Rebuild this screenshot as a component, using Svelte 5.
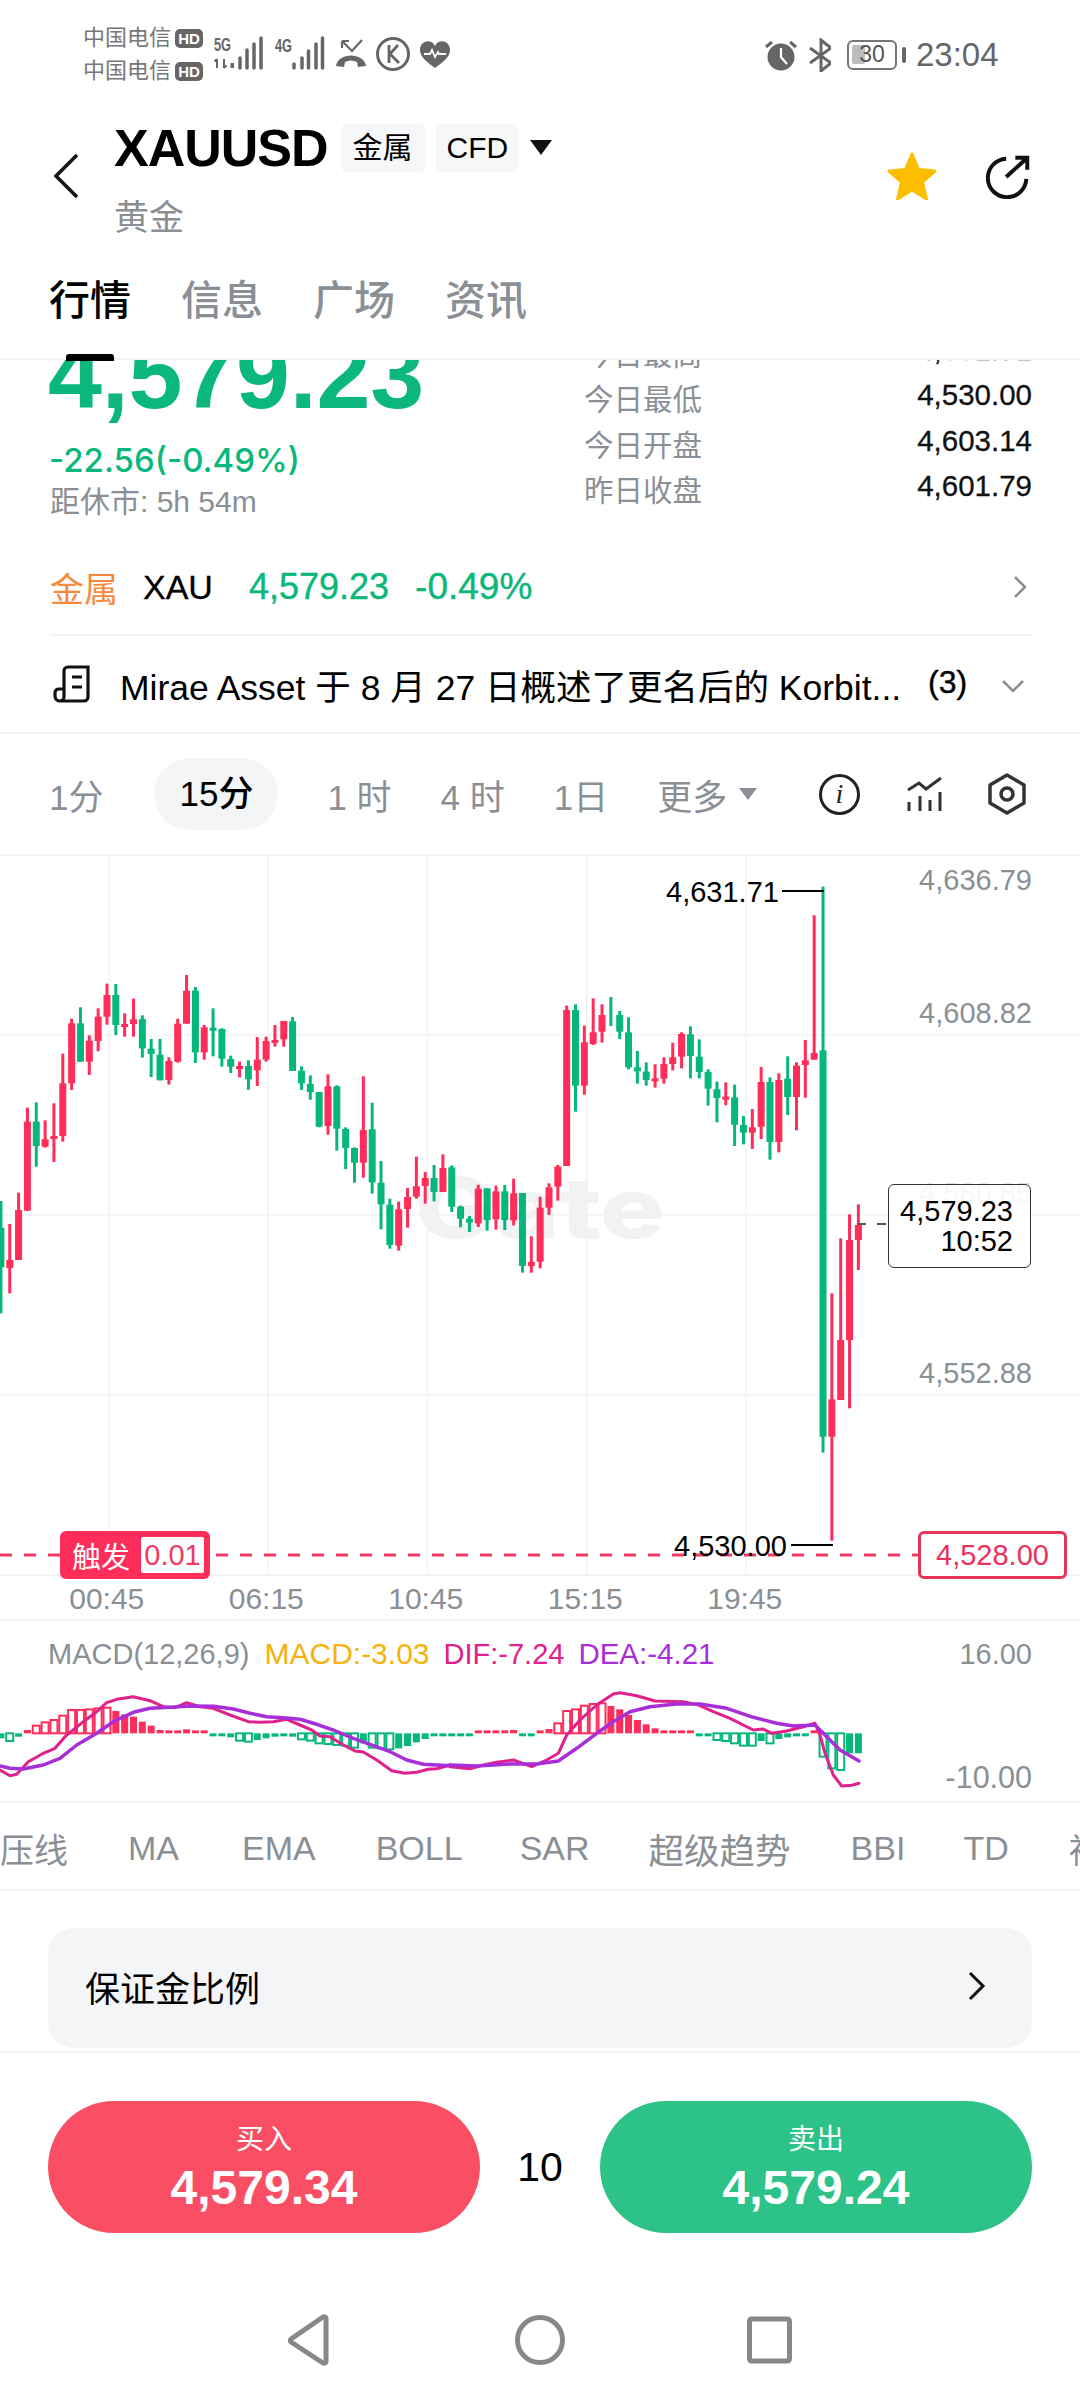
<script>
  const G = 'G', R = 'R';
  const raw = [
    [G,1023,1103,1222,1360],[R,1092,1200,1224,1300],[R,998,1050,1200,1200],[R,743,785,1052,1052],[G,727,785,858,920],
    [R,781,838,860,863],[R,730,828,834,906],[R,581,670,828,845],[R,476,490,670,690],[G,442,490,605,605],
    [R,526,542,605,645],[R,445,470,543,574],[R,371,405,470,494],[G,372,405,495,525],[R,460,492,494,530],
    [R,416,478,492,530],[G,466,477,565,593],[G,537,566,582,651],[G,537,584,661,661],[R,592,603,660,674],
    [R,476,491,605,608],[R,345,392,491,491],[G,381,392,577,609],[R,495,502,577,599],[G,445,503,510,589],
    [G,505,507,596,620],[G,587,597,620,639],[R,605,618,620,652],[G,601,618,658,689],[R,531,599,631,678],
    [R,530,543,599,605],[R,495,540,543,560],[R,483,483,538,560],[G,471,484,633,633],[G,619,632,670,690],
    [G,646,672,696,719],[G,696,696,800,802],[R,643,679,798,824],[G,676,679,806,872],[G,802,807,864,927],
    [G,862,864,908,968],[R,649,810,908,953],[G,728,808,967,1001],[G,903,968,1033,1108],[G,1016,1034,1155,1166],
    [R,1025,1048,1157,1172],[R,984,1011,1047,1103],[R,890,979,1010,1016],[R,936,954,978,1031],[G,915,954,996,1024],
    [R,883,924,996,996],[G,916,922,1040,1056],[G,1037,1040,1076,1102],[G,1068,1076,1088,1116],[R,974,986,1090,1101],
    [G,985,985,1080,1112],[R,977,994,1078,1109],[G,975,994,1080,1110],[R,956,1000,1081,1096],[G,999,999,1218,1238],
    [R,1129,1206,1218,1238],[R,1010,1043,1205,1225],[R,970,982,1043,1065],[R,915,920,980,1022],[R,437,450,918,918],
    [G,433,450,677,755],[R,497,547,677,704],[R,415,517,552,555],[R,433,465,515,548],[G,411,411,411,498],
    [G,453,465,515,537],[G,472,517,622,628],[G,573,622,634,671],[G,607,635,660,677],[R,613,655,658,683],
    [R,592,612,656,671],[R,548,592,612,631],[R,517,522,590,625],[G,499,523,588,655],[G,538,590,636,655],
    [G,628,636,686,737],[G,665,688,714,787],[R,667,710,713,736],[G,674,712,794,858],[G,768,795,818,853],
    [R,747,802,818,867],[R,621,666,800,837],[G,652,666,846,899],[R,640,660,846,877],[G,589,656,711,765],
    [R,607,617,711,811],[R,540,601,615,713],[R,166,579,599,599],[G,80,571,1730,1778],[R,1300,1618,1730,2042],
    [R,1135,1440,1620,1620],[R,1063,1140,1440,1645],[R,1033,1095,1140,1230]
  ];
  const colX = (i) => 0.9 + 8.84 * i;
  const py = (z) => 4 + z / 3;
  const candles = raw.map(([c, wt, bt, bb, wb], i) => ({
    cls: c === G ? 'up' : 'down',
    x: colX(i),
    wy: py(wt),
    wh: (wb - wt) / 3,
    by: py(bt),
    bh: Math.max((bb - bt) / 3, bb === bt ? 0 : 3)
  }));

  const barTops = [175,183,170,150,137,127,120,107,90,90,88,85,83,93,103,110,125,137,150,156,155,148,155,157,
    165,165,172,182,185,180,175,170,168,170,178,182,190,192,195,197,203,190,203,205,208,205,198,187,177,168,165,
    165,165,165,156,156,153,153,150,165,165,157,147,130,93,88,77,72,70,78,88,105,120,133,145,152,155,153,155,
    165,168,180,183,190,197,197,183,190,177,172,165,165,155,230,265,270,220,220];
  const hollow = new Set([1,4,5,6,7,8,9,10,11,12,27,28,34,35,36,37,38,39,40,42,43,44,63,64,65,66,67,68,81,82,83,84,85,87,93,94,95]);
  const bars = barTops.map((t, i) => {
    const base = 160 / 3, v = t / 3;
    const h = Math.max(Math.abs(v - base), 3);
    return {
      x: colX(i) - 3.5,
      y: t > 160 ? base : base - h,
      h,
      cls: (t > 160 ? 'up' : 'down') + (hollow.has(i) ? ' hollow' : '')
    };
  });

  const difL = [0,270,30,287,50,283,85,245,130,220,165,205,195,170,250,125,290,95,320,68,350,58,400,50,450,62,490,80,525,83,560,68,600,80,640,85,690,105,745,125,780,127,820,125,860,118,900,135,935,150,960,168,990,170,1030,195,1065,213,1090,216,1130,240,1175,272,1215,280,1250,277,1285,268,1310,266,1350,255];
  const difR = [0,260,60,266,100,255,140,247,190,240,245,260,290,240,325,220,350,165,390,120,440,75,490,42,510,38,560,47,615,63,700,65,745,75,790,95,840,115,910,150,940,147,965,160,1010,153,1060,140,1095,130,1110,165,1125,220,1150,285,1175,318,1205,316,1227,310];
  const deaL = [0,258,30,265,70,267,130,255,180,235,230,195,290,160,340,125,400,97,450,85,510,82,570,78,640,79,700,87,750,100,800,110,850,113,900,118,950,133,1000,150,1060,175,1120,197,1170,215,1220,240,1270,253,1350,257];
  const deaR = [0,255,80,258,180,252,260,252,325,243,380,205,440,160,490,125,540,95,600,80,680,72,750,72,830,85,910,112,980,130,1030,138,1095,135,1130,170,1170,210,1227,243];
  const toPts = (a, off) => {
    const out = [];
    for (let i = 0; i < a.length; i += 2) out.push(`${(off + a[i] / 3).toFixed(1)},${(a[i + 1] / 3).toFixed(1)}`);
    return out.join(' ');
  };
  const difLine = toPts(difL, 0) + ' ' + toPts(difR, 450);
  const deaLine = toPts(deaL, 0) + ' ' + toPts(deaR, 450);

  const grid = [109.3, 268, 427.5, 586.8, 745.7];
  const times = ['00:45', '06:15', '10:45', '15:15', '19:45'];
  const yLabels = [
    { t: '4,636.79', y: 23.5, faint: false },
    { t: '4,608.82', y: 156.5, faint: false },
    { t: '4,580.85', y: 336.5, faint: true },
    { t: '4,552.88', y: 516.5, faint: false }
  ];
  const stats = [
    ['今日最高', '4,631.71'],
    ['今日最低', '4,530.00'],
    ['今日开盘', '4,603.14'],
    ['昨日收盘', '4,601.79']
  ];
  const tabs = ['行情', '信息', '广场', '资讯'];
  const indicators = ['支撑压线', 'MA', 'EMA', 'BOLL', 'SAR', '超级趋势', 'BBI', 'TD', '神奇九转'];
</script>

<div class="page">
  <header class="status">
    <div class="carriers">
      <div class="carrier">中国电信<span class="hd">HD</span></div>
      <div class="carrier">中国电信<span class="hd">HD</span></div>
    </div>
    <svg class="status-left" width="250" height="50" viewBox="210 30 250 50" aria-hidden="true">
      <text class="net" x="214" y="51" textLength="17" lengthAdjust="spacingAndGlyphs">5G</text>
      <path d="M217 59v9M214.5 61.5l2.5-2.5M224 59v9M226.5 65.5l-2.5 2.5" fill="none" stroke="#666" stroke-width="2"/>
      <rect x="230.500" y="63" width="3.500" height="5" fill="#666"/>
      <path d="M240 58v10M247 50v18M254 44v24M261 38v30" stroke="#666" stroke-width="3.500" stroke-linecap="round"/>
      <text class="net" x="275" y="52" textLength="17" lengthAdjust="spacingAndGlyphs">4G</text>
      <path d="M294 64v4M302 58v10M308.500 51v17M316 44v24M322.500 38v30" stroke="#666" stroke-width="3.500" stroke-linecap="round"/>
      <path d="M336 66c2-14 28-14 30 0l-8 1-1-5c-4-2-8-2-12 0l-1 5z" fill="#666"/>
      <path d="M342 41l10 10 10-11M342 41h7M342 41v7" fill="none" stroke="#666" stroke-width="2.200"/>
      <circle cx="393" cy="54" r="15.500" fill="none" stroke="#666" stroke-width="3"/>
      <path d="M389 45v18M398 45l-8 9 9 9" fill="none" stroke="#666" stroke-width="2.800"/>
      <path d="M435 68c-8-6-15-11-15-18 0-9 11-12 15-4 4-8 15-5 15 4 0 7-7 12-15 18z" fill="#666"/>
      <path d="M424 54h6l2-4 3 7 3-5 1 2h7" fill="none" stroke="#fff" stroke-width="1.800"/>
    </svg>
    <div class="status-right">
      <svg width="66" height="34" viewBox="765 37 66 34" aria-hidden="true">
        <circle cx="781" cy="56" r="13.500" fill="#666"/>
        <path d="M781 47v9l6 7" fill="none" stroke="#fff" stroke-width="2.200"/>
        <path d="M766 46l6-5M796 46l-6-5" fill="none" stroke="#666" stroke-width="3"/>
        <path d="M810 47l21 15-10 8V39l10 8-21 15" fill="none" stroke="#666" stroke-width="3"/>
      </svg>
      <div class="battery">
        <span class="level"></span>
        <span class="batt-text">30</span>
      </div>
      <span class="nub"></span>
      <span class="clock">23:04</span>
    </div>
  </header>

  <section class="head">
    <svg class="back" width="26" height="46" viewBox="0 0 26 46" aria-hidden="true">
      <path d="M24 2L3 23l21 21" fill="none" stroke="#111" stroke-width="3.500"/>
    </svg>
    <div class="title">
      <div class="title-row">
        <h1>XAUUSD</h1>
        <span class="tag">金属</span>
        <span class="tag">CFD</span>
        <span class="caret"></span>
      </div>
      <div class="subtitle">黄金</div>
    </div>
    <svg class="star" width="54" height="50" viewBox="0 0 54 50" aria-hidden="true">
      <path d="M27 4l6.500 15.500 16.500 1.500-12.500 11 4 17L27 40l-14.500 9 4-17L4 21l16.500-1.500z" fill="#fdbe00" stroke="#fdbe00" stroke-width="3" stroke-linejoin="round"/>
    </svg>
    <svg class="share" width="44" height="44" viewBox="0 0 48 48" aria-hidden="true">
      <path d="M22 4A21 21 0 1 0 44 26M22 24L45 3M32 3h13v13" fill="none" stroke="#111" stroke-width="4.300"/>
    </svg>
  </section>

  <nav class="tabs">
    {#each tabs as t, i}
      <span class="tab" class:active={i === 0}>{t}</span>
    {/each}
  </nav>

  <section class="overview">
    <div class="quote">
      <div class="quote-left">
        <div class="bigprice">4,579.23</div>
        <div class="change">-22.56(-0.49%)</div>
        <div class="countdown">距休市: 5h 54m</div>
      </div>
      <div class="stats">
        {#each stats as [k, v]}
          <div class="stat"><span class="k">{k}</span><span class="v">{v}</span></div>
        {/each}
      </div>
    </div>
    <div class="metal">
      <span class="m-tag">金属</span>
      <span class="m-sym">XAU</span>
      <span class="m-price">4,579.23</span>
      <span class="m-pct">-0.49%</span>
      <svg class="m-go" width="16" height="24" viewBox="0 0 16 24" aria-hidden="true">
        <path d="M3 2l10 10L3 22" fill="none" stroke="#8a8f96" stroke-width="2.500"/>
      </svg>
    </div>
  </section>

  <section class="news">
    <svg width="40" height="38" viewBox="0 0 40 38" aria-hidden="true">
      <path d="M12 24V6a4 4 0 0 1 4-4h20v30a4 4 0 0 1-4 4H8a5 5 0 0 1-5-5v-3c0-2 1-4 4-4h5v8a4 4 0 0 1-4 4" fill="none" stroke="#111" stroke-width="3.200"/>
      <path d="M20 12h10M20 22h10" stroke="#111" stroke-width="3.200"/>
    </svg>
    <span class="headline">Mirae Asset 于 8 月 27 日概述了更名后的 Korbit...</span>
    <span class="count">(3)</span>
    <svg width="24" height="14" viewBox="0 0 24 14" aria-hidden="true">
      <path d="M2 2l10 10L22 2" fill="none" stroke="#8a8f96" stroke-width="2.500"/>
    </svg>
  </section>

  <section class="intervals">
    <span class="iv">1分</span>
    <span class="iv pill">15分</span>
    <span class="iv">1 时</span>
    <span class="iv">4 时</span>
    <span class="iv">1日</span>
    <span class="iv more">更多<i class="mini-caret"></i></span>
    <div class="tools">
      <div class="info-ic"><span>i</span></div>
      <svg width="37" height="36" viewBox="0 0 37 36" aria-hidden="true">
        <path d="M2 14l11-7 7 6L35 2" fill="none" stroke="#333" stroke-width="3" stroke-linejoin="miter"/>
        <path d="M3 26v9M14 20v15M24 24v11M34 16v19" stroke="#333" stroke-width="3"/>
      </svg>
      <svg width="38" height="42" viewBox="0 0 38 42" aria-hidden="true">
        <path d="M19 2l17 10v18L19 40 2 30V12z" fill="none" stroke="#333" stroke-width="3.500" stroke-linejoin="round"/>
        <circle cx="19" cy="21" r="6" fill="none" stroke="#333" stroke-width="3.500"/>
      </svg>
    </div>
  </section>

  <section class="chart">
    <svg class="plot" width="1080" height="719" viewBox="0 0 1080 719" aria-hidden="true">
      {#each grid as g}
        <line class="gl" x1={g} x2={g} y1="0" y2="719"/>
      {/each}
      <line class="gl" x1="0" x2="1080" y1="179" y2="179"/>
      <line class="gl" x1="0" x2="1080" y1="359" y2="359"/>
      <line class="gl" x1="0" x2="1080" y1="539" y2="539"/>
      <text class="mark" x="415" y="382" textLength="250" lengthAdjust="spacingAndGlyphs">Gate</text>
      {#each candles as c}
        <rect class={c.cls} x={c.x - 1.5} y={c.wy} width="3" height={c.wh}/>
        <rect class={c.cls} x={c.x - 3.5} y={c.by} width="7" height={c.bh}/>
      {/each}
      <line class="trigger" x1="0" x2="918" y1="699" y2="699"/>
      <line class="pointer" x1="782" x2="824" y1="35" y2="35"/>
      <line class="pointer" x1="791" x2="833" y1="689" y2="689"/>
      <line class="last" x1="857" x2="888" y1="368" y2="368"/>
    </svg>
    {#each yLabels as l}
      <span class="ylab" class:faint={l.faint} style:top="{l.y - 18}px">{l.t}</span>
    {/each}
    <span class="extreme hi">4,631.71</span>
    <span class="extreme lo">4,530.00</span>
    <div class="lastbox"><span>4,579.23</span><span>10:52</span></div>
    <div class="badge"><span>触发</span><b>0.01</b></div>
    <div class="order">4,528.00</div>
  </section>

  <section class="times">
    {#each times as t}<span>{t}</span>{/each}
  </section>

  <section class="macd">
    <div class="legend">
      <span class="l-name">MACD(12,26,9)</span>
      <span class="l-macd">MACD:-3.03</span>
      <span class="l-dif">DIF:-7.24</span>
      <span class="l-dea">DEA:-4.21</span>
      <span class="l-top">16.00</span>
    </div>
    <svg class="macd-plot" width="1080" height="120" viewBox="0 0 1080 120" aria-hidden="true">
      {#each bars as b}
        <rect class={b.cls} x={b.x} y={b.y} width="7" height={b.h}/>
      {/each}
      <polyline class="dif" points={difLine}/>
      <polyline class="dea" points={deaLine}/>
    </svg>
    <span class="l-bot">-10.00</span>
  </section>

  <section class="indicators">
    {#each indicators as n}<span>{n}</span>{/each}
  </section>

  <section class="margin">
    <div class="margin-card">
      <span>保证金比例</span>
      <svg width="18" height="30" viewBox="0 0 18 30" aria-hidden="true">
        <path d="M2 2l13 13L2 28" fill="none" stroke="#111" stroke-width="3"/>
      </svg>
    </div>
  </section>

  <section class="trade">
    <button class="btn buy"><span>买入</span><strong>4,579.34</strong></button>
    <span class="lever">10</span>
    <button class="btn sell"><span>卖出</span><strong>4,579.24</strong></button>
  </section>

  <svg class="sysnav" width="1080" height="60" viewBox="0 2310 1080 60" aria-hidden="true">
    <path d="M326 2319v44a2 2 0 0 1-3 1l-32-21a2 2 0 0 1 0-3l32-22a2 2 0 0 1 3 1z" fill="none" stroke="#888" stroke-width="5" stroke-linejoin="round"/>
    <circle cx="540" cy="2341" r="22.500" fill="none" stroke="#888" stroke-width="5"/>
    <rect x="749.500" y="2320" width="40" height="42" rx="2" fill="none" stroke="#888" stroke-width="5"/>
  </svg>
</div>

<style>
  :global(body) { margin: 0; background: #fff; }
  .page {
    width: 1080px;
    height: 2400px;
    overflow: hidden;
    background: #fff;
    color: #000;
    font-family: "Liberation Sans", "Noto Sans CJK SC", sans-serif;
  }
  svg { display: block; flex: none; }

  .status { height: 90px; display: flex; position: relative; padding-left: 83px; box-sizing: border-box; padding-top: 22px; }
  .carriers { width: 127px; display: flex; flex-direction: column; gap: 9px; flex: none; padding-top: 4px; }
  .carrier { display: flex; align-items: center; font-size: 22px; line-height: 24px; color: #777; white-space: nowrap; }
  .hd { margin-left: 4px; background: #666; color: #fff; border-radius: 5px; font-size: 15px; font-weight: 700; line-height: 19px; width: 28px; text-align: center; }
  .status-left { margin-top: 8px; margin-left: 0; }
  .net { font-size: 18px; font-weight: 700; fill: #666; }
  .status-right { position: absolute; left: 765px; top: 37px; display: flex; align-items: center; }
  .battery { margin-left: 16px; width: 50px; height: 30px; box-sizing: border-box; border: 2.5px solid #777; border-radius: 6px; position: relative; }
  .level { position: absolute; left: 3px; top: 3px; width: 13px; height: 19px; background: #bdbdbd; border-radius: 2px; }
  .batt-text { position: absolute; left: 0; right: 0; top: 0; text-align: center; font-size: 23px; line-height: 25px; color: #555; }
  .nub { width: 4px; height: 16px; background: #666; margin-left: 5px; border-radius: 2px; }
  .clock { margin-left: 10px; font-size: 33px; line-height: 36px; color: #666; }

  .head { height: 175px; display: flex; box-sizing: border-box; padding-left: 53px; position: relative; }
  .back { margin-top: 63px; }
  .title { margin-left: 35px; padding-top: 30px; }
  .title-row { display: flex; align-items: center; height: 56px; }
  h1 { margin: 0; font-size: 52px; font-weight: 700; letter-spacing: -1px; line-height: 56px; }
  .tag { height: 48px; line-height: 48px; padding: 0 12px; background: #f6f7f8; border-radius: 6px; font-size: 30px; }
  h1 + .tag { margin-left: 13px; }
  .tag + .tag { margin-left: 11px; padding: 0 11px; }
  .caret { width: 0; height: 0; margin-left: 11px; margin-top: -2px; border-left: 11px solid transparent; border-right: 11px solid transparent; border-top: 15px solid #111; }
  .subtitle { font-size: 35px; line-height: 44px; color: #8a8f96; margin-top: 20px; }
  .star { position: absolute; left: 885px; top: 60px; }
  .share { position: absolute; left: 986px; top: 65px; }

  .tabs { height: 95px; box-sizing: border-box; display: flex; gap: 50px; padding: 11px 0 0 49px; position: relative; border-bottom: 2px solid #f1f2f4; }
  .tab { font-size: 41px; line-height: 50px; color: #8a8f96; font-weight: 500; height: 50px; }
  .tab.active { color: #000; position: relative; }
  .tab.active::after { content: ""; position: absolute; left: 17px; width: 48px; height: 7px; bottom: -35px; background: #000; border-radius: 3px 3px 0 0; }

  .overview { height: 276px; overflow: hidden; }
  .quote { display: flex; margin-top: -33px; height: 193px; padding: 0 48px 0 48px; }
  .quote-left { width: 536px; flex: none; }
  .bigprice { font-size: 97px; line-height: 96px; font-weight: 700; color: #0bb77b; letter-spacing: -0.2px; }
  .change { font-family: Inter, "Liberation Sans", sans-serif; font-size: 33px; line-height: 40px; margin-top: 17px; color: #0bb77b; font-weight: 500; margin-left: 1px; }
  .countdown { font-size: 30px; line-height: 36px; margin-top: 4px; color: #8a8f96; margin-left: 2px; }
  .stats { flex: 1; padding-top: 2px; }
  .stat { display: flex; justify-content: space-between; height: 45.5px; align-items: center; }
  .k { font-size: 29.5px; color: #8a8f96; }
  .v { font-size: 29.5px; color: #111; -webkit-text-stroke: 0.3px #111; position: relative; top: -2px; }
  .metal { margin: 20px 48px 0 50px; height: 96px; box-sizing: border-box; border-bottom: 2px solid #f1f2f4; display: flex; align-items: center; }
  .m-tag { font-size: 34px; color: #f58a3c; }
  .m-sym { font-size: 34px; margin-left: 25px; -webkit-text-stroke: 0.3px #000; }
  .m-price { font-size: 36px; margin-left: 36px; color: #0bb77b; -webkit-text-stroke: 0.4px #0bb77b; }
  .m-pct { font-size: 37px; margin-left: 26px; color: #0bb77b; -webkit-text-stroke: 0.4px #0bb77b; }
  .m-go { margin-left: auto; margin-right: 4px; }

  .news { height: 98px; box-sizing: border-box; display: flex; align-items: center; padding: 0 52px 0 52px; border-bottom: 2px solid #f1f2f4; }
  .headline { font-size: 35.5px; margin-left: 28px; white-space: nowrap; width: 808px; }
  .count { font-size: 32px; margin-left: 0; margin-top: -3px; -webkit-text-stroke: 0.4px #000; }
  .news svg:last-child { margin-left: 34px; margin-top: 4px; }

  .intervals { height: 122px; box-sizing: border-box; display: flex; align-items: center; gap: 49px; padding: 0 54px 0 49px; border-bottom: 2px solid #f1f2f4; }
  .iv { font-size: 35px; color: #8a8f96; white-space: nowrap; }
  .pill { color: #000; background: #f4f5f7; height: 72px; line-height: 72px; padding: 0 25px; border-radius: 36px; font-weight: 500; margin-left: 2px; }
  .more { display: flex; align-items: center; }
  .mini-caret { margin-left: 12px; width: 0; height: 0; border-left: 9px solid transparent; border-right: 9px solid transparent; border-top: 12px solid #8a8f96; }
  .tools { margin-left: auto; display: flex; align-items: center; gap: 45px; }
  .info-ic { width: 41px; height: 41px; box-sizing: border-box; border: 3.5px solid #222; border-radius: 50%; display: flex; align-items: center; justify-content: center; font-family: "Liberation Serif", serif; font-style: italic; font-size: 28px; color: #222; margin-right: 1px; }

  .chart { position: relative; height: 720px; box-sizing: border-box; border-bottom: 2px solid #f1f2f4; }
  .plot { position: absolute; left: 0; top: 0; }
  .gl { stroke: #f1f3f4; stroke-width: 1.5; }
  .mark { font-family: Inter, sans-serif; font-size: 84px; font-weight: 800; fill: #f1f2f3; }
  rect.up { fill: #06b77b; }
  rect.down { fill: #ff2d5a; }
  .trigger { stroke: #ef3a62; stroke-width: 3; stroke-dasharray: 12 12; }
  .pointer { stroke: #000; stroke-width: 2; }
  .last { stroke: #555; stroke-width: 2; stroke-dasharray: 9 11; }
  .ylab { position: absolute; right: 48px; font-size: 29px; line-height: 36px; color: #8a8f96; }
  .ylab.faint { color: #dcdfe2; }
  .extreme { position: absolute; font-size: 29px; line-height: 36px; color: #000; }
  .hi { left: 666px; top: 18px; }
  .lo { left: 674px; top: 672px; }
  .lastbox { position: absolute; left: 888px; top: 328px; width: 143px; height: 84px; box-sizing: border-box; border: 1px solid #333; border-radius: 6px; background: rgba(255, 255, 255, 0.75); display: flex; flex-direction: column; align-items: flex-end; padding: 12px 17px 0 0; font-size: 29px; line-height: 29.5px; }
  .badge { position: absolute; left: 60px; top: 675px; width: 150px; height: 48px; box-sizing: border-box; border-radius: 6px; background: #ff2d5a; color: #fff; display: flex; align-items: center; padding: 0 6px 0 12px; font-size: 29px; }
  .badge span { flex: 1; }
  .badge b { font-weight: 400; color: #ef3a62; background: #fff; width: 63px; height: 36px; line-height: 36px; text-align: center; border-radius: 2px; }
  .order { position: absolute; left: 918px; top: 675px; width: 149px; height: 48px; box-sizing: border-box; border: 3px solid #e8345a; border-radius: 6px; background: #fff; color: #e8345a; font-size: 29px; line-height: 42px; text-align: center; }

  .times { height: 45px; box-sizing: border-box; display: grid; grid-template-columns: repeat(5, 159.500px); padding-left: 27px; border-bottom: 2px solid #f1f2f4; font-size: 30px; line-height: 46px; color: #8a8f96; text-align: center; }

  .macd { height: 182px; position: relative; box-sizing: border-box; border-bottom: 2px solid #f1f2f4; }
  .legend { height: 59px; display: flex; align-items: flex-end; padding: 0 48px; font-size: 29px; line-height: 42px; box-sizing: border-box; white-space: nowrap; }
  .legend span { height: 42px; position: relative; top: -5px; }
  .l-name { color: #8a8f96; }
  .l-macd { color: #f5b20a; margin-left: 15px; font-size: 30px; }
  .l-dif { color: #e0208c; margin-left: 14px; }
  .l-dea { color: #a82fd8; margin-left: 14px; font-size: 29.5px; }
  .l-top { margin-left: auto; color: #8a8f96; font-size: 29px; }
  .l-bot { position: absolute; right: 48px; top: 135px; font-size: 30.5px; line-height: 42px; color: #8a8f96; }
  .macd-plot rect.hollow { fill: none; stroke-width: 2; }
  .macd-plot rect.up.hollow { stroke: #06b77b; }
  .macd-plot rect.down.hollow { stroke: #ff2d5a; }
  .dif, .dea { fill: none; stroke-linejoin: round; stroke-linecap: round; }
  .dif { stroke: #e0208c; stroke-width: 3; }
  .dea { stroke: #a82fd8; stroke-width: 3.500; }

  .indicators { height: 88px; box-sizing: border-box; display: flex; align-items: center; gap: 60px; margin-left: -68px; width: 1300px; padding: 5px 0 0; border-bottom: 2px solid #f1f2f4; font-size: 34px; color: #8a8f96; white-space: nowrap; }
  .indicators span:nth-child(3) { margin-left: 3px; }
  .indicators span:nth-child(5) { margin-left: -3px; }
  .indicators span:nth-child(6) { font-size: 35.5px; margin-left: -1px; }
  .indicators span:nth-child(8) { margin-left: -2px; }

  .margin { height: 162px; box-sizing: border-box; padding: 37px 48px 0; border-bottom: 2px solid #f3f4f6; }
  .margin-card { box-sizing: border-box; height: 120px; border-radius: 26px; background: #f4f5f7; display: flex; align-items: center; justify-content: space-between; padding: 0 46px 4px 37px; font-size: 35px; }

  .trade { display: flex; align-items: center; padding: 48px 48px 0; gap: 0; }
  .btn { border: 0; width: 432px; height: 132px; border-radius: 66px; color: #fff; font-family: inherit; display: flex; flex-direction: column; align-items: center; justify-content: center; padding: 0; }
  .buy { background: #fa4e65; }
  .sell { background: #2dc287; }
  .btn span { font-size: 28px; line-height: 36px; margin-top: 3px; }
  .btn strong { font-size: 48px; line-height: 56px; font-weight: 700; margin-top: 2px; }
  .lever { width: 120px; text-align: center; font-size: 41px; line-height: 48px; }

  .sysnav { margin-top: 76px; }
</style>
